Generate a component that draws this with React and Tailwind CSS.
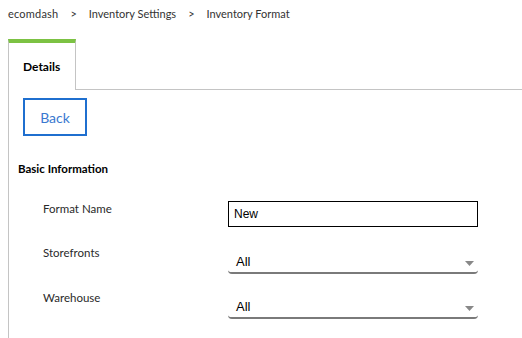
import React from "react";

function Select({ value }) {
  return (
    <div className="relative w-[250px] h-[22px] border-b-2 border-[#7a7a7a] rounded-b-[4px] flex items-center pl-[8px]">
      <span className="text-[13px] text-black" style={{ fontFamily: '"Liberation Sans", Arial, sans-serif' }}>{value}</span>
      <svg className="absolute right-[4px] top-[9px]" width="9" height="5" viewBox="0 0 9 5">
        <path d="M0 0 H9 L4.5 5 Z" fill="#888" />
      </svg>
    </div>
  );
}

export default function App() {
  return (
    <div className="w-[522px] h-[338px] bg-white overflow-hidden text-[#2a2a2a]" style={{ fontFamily: 'Lato, "Noto Sans", sans-serif' }}>
      <div className="flex items-center gap-[12px] pl-[8px] pt-[7px] h-[22px] text-[11px] text-[#333]">
        <span className="tracking-[0.2px]">ecomdash</span>
        <span>&gt;</span>
        <span>Inventory Settings</span>
        <span>&gt;</span>
        <span>Inventory Format</span>
      </div>
      <div className="flex mt-[17px] pl-[8px]">
        <div className="w-[68px] h-[51px] border-t-4 border-[#7cc243] border-x border-x-[#c4c4c4] flex items-center pl-[14px] text-[12px] font-bold text-black">
          Details
        </div>
        <div className="flex-1 border-b border-[#c4c4c4]"></div>
      </div>
      <div className="ml-[8px] border-l border-[#c4c4c4] pl-[14px] pt-[8px] h-[260px]">
        <button className="w-[64px] h-[38px] border-2 border-[#1f6fcf] text-[#3a78d0] text-[14px] flex items-center justify-center">
          Back
        </button>
        <div className="mt-[26px] -ml-[5px] text-[11.5px] leading-[14px] font-bold text-black">Basic Information</div>
        <div className="mt-[25px] flex items-start">
          <div className="w-[205px] pl-[20px] text-[11.5px] leading-[14px] pt-[1px]">Format Name</div>
          <div className="w-[250px] h-[26px] border border-black flex items-center pl-[5px] text-[12px] text-black" style={{ fontFamily: '"Liberation Sans", Arial, sans-serif' }}>New</div>
        </div>
        <div className="mt-[25px] flex items-start">
          <div className="w-[205px] pl-[20px] text-[11.5px] leading-[14px] -mt-[6px]">Storefronts</div>
          <Select value="All" />
        </div>
        <div className="mt-[23px] flex items-start">
          <div className="w-[205px] pl-[20px] text-[11.5px] leading-[14px] -mt-[6px]">Warehouse</div>
          <Select value="All" />
        </div>
      </div>
    </div>
  );
}
